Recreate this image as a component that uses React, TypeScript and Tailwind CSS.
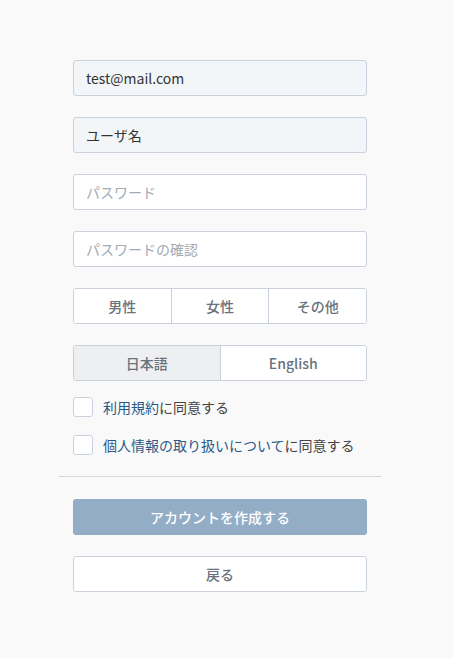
import React, { useState } from 'react';

const font = { fontFamily: '"Noto Sans CJK JP", "Noto Sans", sans-serif' };

function App() {
  const [gender, setGender] = useState<string>('');
  const [lang, setLang] = useState<'ja' | 'en'>('ja');
  const [terms, setTerms] = useState(false);
  const [privacy, setPrivacy] = useState(false);

  const inputCls =
    'w-full h-9 rounded-[3px] border border-[#c9d2dc] px-3 text-sm text-[#333] placeholder:text-[#a3abb3] focus:outline-none';

  return (
    <div className="min-h-screen w-full bg-[#f9f9f9] text-[#333]" style={font}>
      <div className="flex flex-col pt-[60px]">
        <div className="ml-[73px] w-[294px] flex flex-col gap-[21px]">
          <input className={`${inputCls} bg-[#f3f6f9]`} defaultValue="test@mail.com" />
          <input className={`${inputCls} bg-[#f3f6f9]`} defaultValue="ユーザ名" />
          <input className={`${inputCls} bg-white`} type="password" placeholder="パスワード" />
          <input className={`${inputCls} bg-white`} type="password" placeholder="パスワードの確認" />

          <div className="flex h-9 rounded-[3px] border border-[#c9d2dc] bg-white overflow-hidden">
            {['男性', '女性', 'その他'].map((g, i) => (
              <button
                key={g}
                onClick={() => setGender(g)}
                className={`flex-1 text-sm font-medium text-[#69727c] ${i > 0 ? 'border-l border-[#c9d2dc]' : ''} ${
                  gender === g ? 'bg-[#eeeff1]' : 'bg-white'
                }`}
              >
                {g}
              </button>
            ))}
          </div>

          <div className="flex h-9 rounded-[3px] border border-[#c9d2dc] bg-white overflow-hidden">
            <button
              onClick={() => setLang('ja')}
              className={`flex-1 text-sm font-medium text-[#69727c] ${lang === 'ja' ? 'bg-[#eeeff1]' : 'bg-white'}`}
            >
              日本語
            </button>
            <button
              onClick={() => setLang('en')}
              className={`flex-1 border-l border-[#c9d2dc] text-sm font-medium text-[#69727c] ${
                lang === 'en' ? 'bg-[#eeeff1]' : 'bg-white'
              }`}
            >
              English
            </button>
          </div>
        </div>

        <div className="ml-[73px] w-[294px] mt-[16px] flex flex-col gap-[18px]">
          <label className="flex items-center gap-[10px] text-sm cursor-pointer">
            <span
              onClick={() => setTerms(!terms)}
              className={`w-5 h-5 rounded-[3px] border border-[#c9d2dc] ${terms ? 'bg-[#93adc7]' : 'bg-white'}`}
            />
            <span>
              <span className="text-[#2a5989]">利用規約</span>
              <span className="text-[#444]">に同意する</span>
            </span>
          </label>
          <label className="flex items-center gap-[10px] text-sm cursor-pointer">
            <span
              onClick={() => setPrivacy(!privacy)}
              className={`w-5 h-5 rounded-[3px] border border-[#c9d2dc] ${privacy ? 'bg-[#93adc7]' : 'bg-white'}`}
            />
            <span>
              <span className="text-[#2a5989]">個人情報の取り扱いについて</span>
              <span className="text-[#444]">に同意する</span>
            </span>
          </label>
        </div>

        <div className="ml-[59px] w-[322px] mt-[21px] h-px bg-[#d3d8dd]" />

        <div className="ml-[73px] w-[294px] mt-[22px] flex flex-col gap-[21px]">
          <button className="h-9 rounded-[3px] bg-[#93adc7] text-sm font-medium text-white">
            アカウントを作成する
          </button>
          <button className="h-9 rounded-[3px] border border-[#c9d2dc] bg-white text-sm font-medium text-[#69727c]">
            戻る
          </button>
        </div>
      </div>
    </div>
  );
}

export default App;
